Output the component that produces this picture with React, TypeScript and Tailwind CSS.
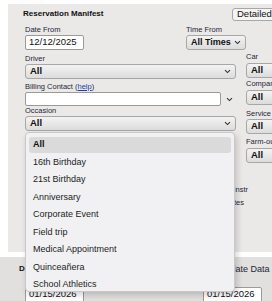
import React from "react";

const Chevron = () => (
  <svg width="7" height="5" viewBox="0 0 7 5" className="shrink-0">
    <path d="M1 1.2 L3.5 3.6 L6 1.2" fill="none" stroke="#333" strokeWidth="1.1" />
  </svg>
);

const Label = ({ children, className = "" }: { children: React.ReactNode; className?: string }) => (
  <div className={`text-[7.5px] leading-[8px] text-[#1e2636] whitespace-nowrap ${className}`}>{children}</div>
);

const Select = ({ value, className = "", chevron = true }: { value: string; className?: string; chevron?: boolean }) => (
  <div
    className={`h-[15px] flex items-center justify-between px-[4px] border border-[#a7a7a7] rounded-[3px] bg-gradient-to-b from-[#f3f3f3] to-[#dcdcdc] text-[#111] ${className}`}
  >
    <span className="whitespace-nowrap">{value}</span>
    {chevron && <Chevron />}
  </div>
);

export default function App() {
  const occasions = [
    "All",
    "16th Birthday",
    "21st Birthday",
    "Anniversary",
    "Corporate Event",
    "Field trip",
    "Medical Appointment",
    "Quinceañera",
    "School Athletics",
  ];

  return (
    <div className="w-[272px] h-[301px] overflow-hidden bg-white relative font-['Liberation_Sans',Arial,sans-serif]">
      {/* upper panel */}
      <div className="ml-[8px] mt-[4px] w-[300px] h-[248px] bg-[#ebe8e8] pt-[2px]">
        <div className="h-[16px] flex items-center">
          <div className="ml-[15px] w-[82px] text-[8px] font-bold text-[#111] whitespace-nowrap">Reservation Manifest</div>
          <div className="ml-[127px] h-[13px] px-[4px] flex items-center border border-[#a7a7a7] rounded-[3px] bg-[#f4f4f4] text-[9.5px] text-[#111] whitespace-nowrap">
            Detailed Trips
          </div>
        </div>

        {/* row 1 */}
        <div className="flex pl-[17px] mt-[4px]">
          <div className="w-[161px]">
            <Label>Date From</Label>
            <div className="mt-[1px] w-[59px] h-[15px] bg-white border border-[#9a9a9a] rounded-[2px] flex items-center px-[3px] text-[9.5px] text-[#111]">
              12/12/2025
            </div>
          </div>
          <div>
            <Label>Time From</Label>
            <Select value="All Times" className="mt-[1px] w-[60px] text-[9px] font-semibold" />
          </div>
        </div>

        <div className="flex pl-[17px]">
          {/* left column */}
          <div className="w-[211px]">
            <Label className="mt-[5px]">Driver</Label>
            <Select value="All" className="mt-[1px] text-[9.5px] font-bold" />
            <Label className="mt-[4px]">
              Billing Contact (<span className="text-[#1a3fa8] underline">help</span>)
            </Label>
            <div className="mt-[1px] flex items-center">
              <div className="w-[202px] h-[14px] bg-white border border-[#9a9a9a] rounded-[2px]" />
              <div className="ml-[2px] w-[13px] flex justify-center">
                <Chevron />
              </div>
            </div>
            <Label className="mt-[1px]">Occasion</Label>
            <div className="relative">
              <Select value="All" className="mt-[1px] text-[9.5px] font-bold" />
              {/* open menu */}
              <div className="absolute left-0 top-[16px] w-[210px] h-[160px] z-10 bg-[#f1f1f3] border border-[#c9c9cc] rounded-[4px] shadow-[2px_3px_6px_rgba(0,0,0,0.18)] pt-[3px]">
                {occasions.map((o, i) => (
                  <div key={o} className="h-[17.5px] px-[3px] flex items-center">
                    <div
                      className={`w-full h-[16px] flex items-center px-[4px] rounded-[3px] text-[9px] whitespace-nowrap ${
                        i === 0 ? "bg-[#dadada] font-bold text-[#111]" : "font-medium text-[#1c1c1c]"
                      }`}
                    >
                      {o}
                    </div>
                  </div>
                ))}
              </div>
            </div>
          </div>

          {/* right column */}
          <div className="ml-[10px] w-[40px]">
            <Label className="mt-[3px]">Car</Label>
            <Select value="All" className="mt-[2px] h-[14px] text-[9.5px] font-bold" chevron={false} />
            <Label className="mt-[2px]">Company</Label>
            <Select value="All" className="mt-[2px] h-[14px] text-[9.5px] font-bold" chevron={false} />
            <Label className="mt-[5px]">Service</Label>
            <Select value="All" className="mt-[1px] h-[14px] text-[9.5px] font-bold" chevron={false} />
            <Label className="mt-[4px]">Farm-out</Label>
            <Select value="All" className="mt-[2px] h-[14px] text-[9.5px] font-bold" chevron={false} />
            <div className="mt-[23px] -ml-[20px] w-[22px] flex flex-col items-end">
              <Label>Instr</Label>
              <Label className="mt-[5px] mr-[4px]">Notes</Label>
            </div>
          </div>
        </div>
      </div>

      {/* lower panel */}
      <div className="mt-[5px] h-[44px] bg-[#e2dfdf] pl-[19px] pt-[6px] relative">
        <div className="flex">
          <div className="w-[20px] text-[8px] font-bold text-[#111] whitespace-nowrap">Date</div>
          <div className="ml-[180px] text-[9px] text-[#1e2636] whitespace-nowrap">Update Data</div>
        </div>
        <div className="flex mt-[10px]">
          <div className="ml-[6px] w-[59px] h-[16px] bg-white border border-[#9a9a9a] rounded-[2px] flex items-center px-[3px] text-[9.5px] text-[#111]">
            01/15/2026
          </div>
          <div className="ml-[119px] w-[59px] h-[16px] bg-white border border-[#9a9a9a] rounded-[2px] flex items-center px-[3px] text-[9.5px] text-[#111]">
            01/15/2026
          </div>
        </div>
      </div>
    </div>
  );
}
